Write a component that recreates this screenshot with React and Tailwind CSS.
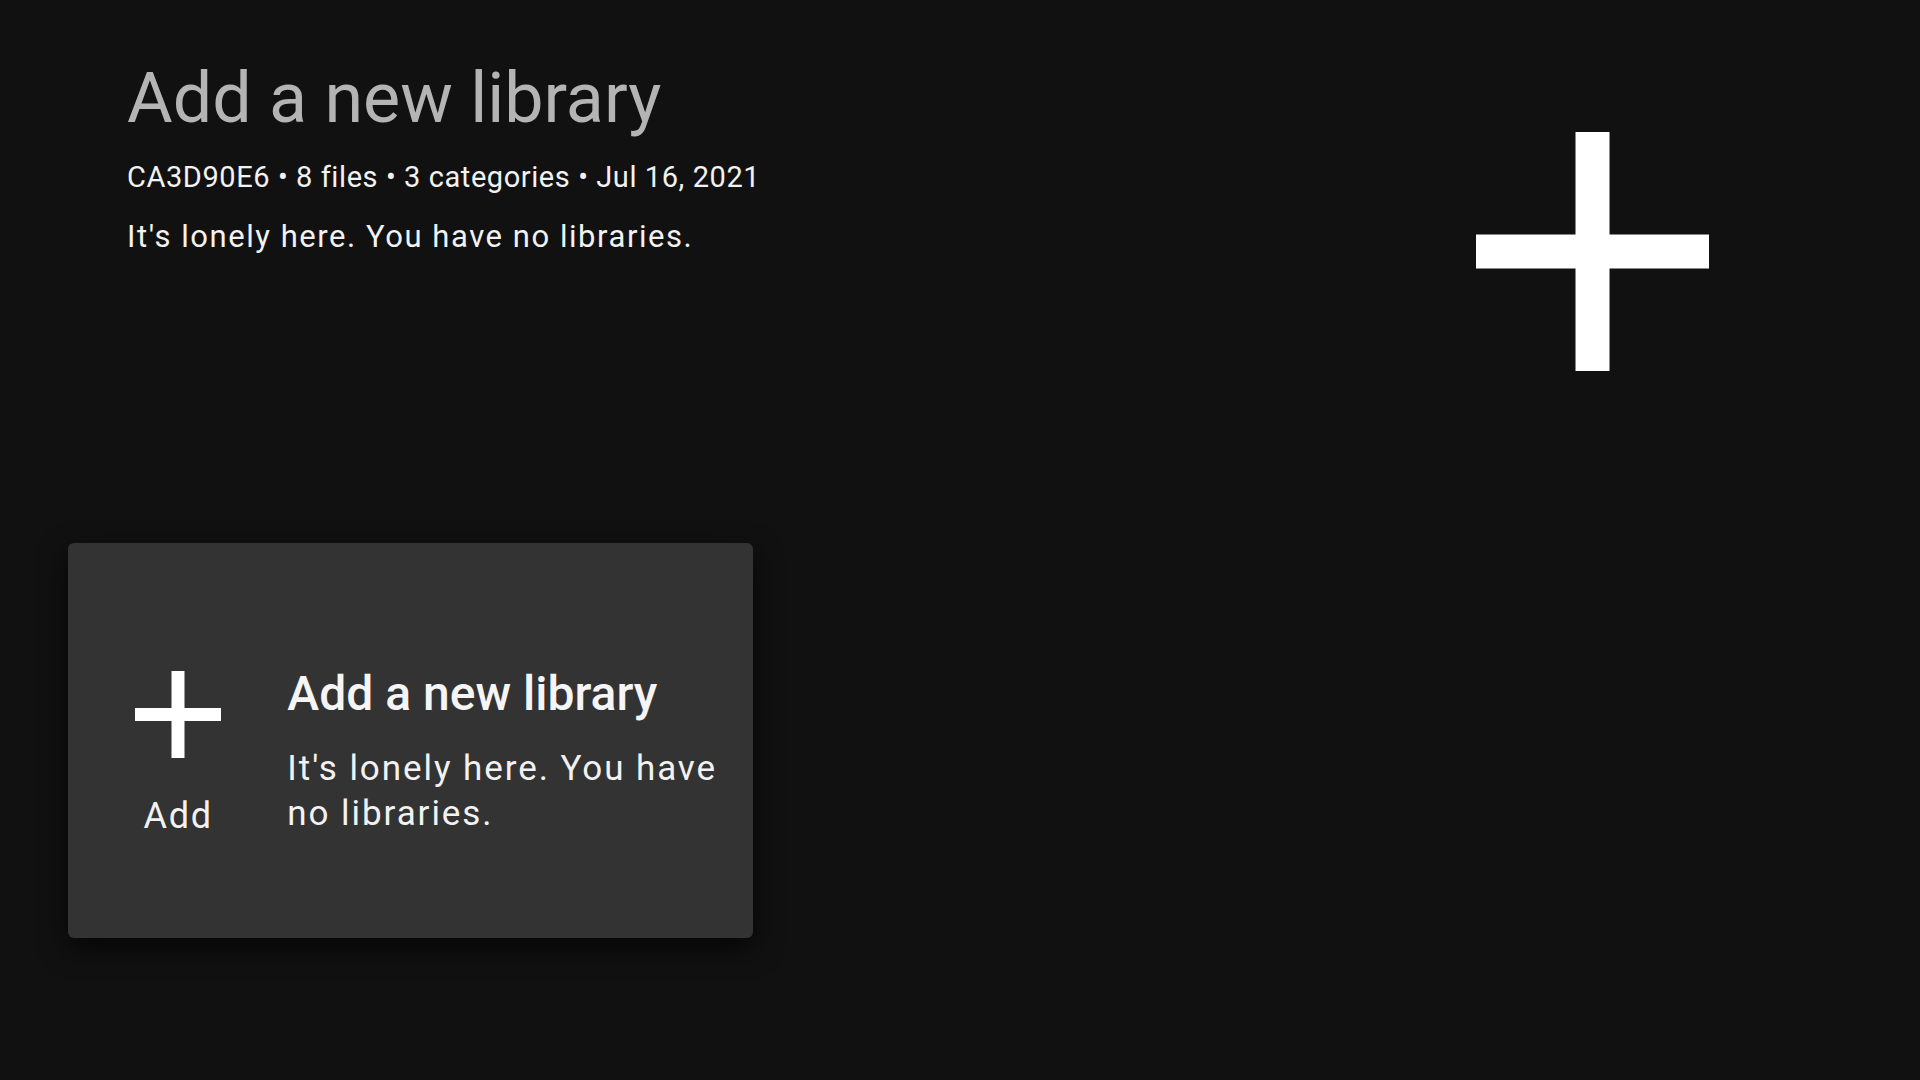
import React from 'react';

const Plus = ({ w, h, stroke, className }) => (
    <svg width={w} height={h} viewBox={`0 0 ${w} ${h}`} className={className}>
        <rect x={(w - stroke) / 2} y="0" width={stroke} height={h} fill="#ffffff" />
        <rect x="0" y={(h - stroke) / 2} width={w} height={stroke} fill="#ffffff" />
    </svg>
);

const App = () => {
    return (
        <div className="w-full min-h-screen bg-[#111111] font-['Roboto',sans-serif] flex flex-col">
            <div className="flex justify-between items-start pl-[127px] pr-[211px] pt-[63px]">
                <div className="flex flex-col">
                    <h1 className="text-[70px] leading-[70px] font-normal text-[#b4b4b4]">
                        Add a new library
                    </h1>
                    <div className="mt-[30px] text-[29px] leading-[29px] tracking-[0.02em] text-[#f2f2f2]">
                        CA3D90E6 • 8 files • 3 categories • Jul 16, 2021
                    </div>
                    <div className="mt-[29px] text-[31px] leading-[31px] tracking-[0.05em] text-[#f2f2f2]">
                        It's lonely here. You have no libraries.
                    </div>
                </div>
                <Plus w={233} h={239} stroke={34} className="mt-[69px]" />
            </div>

            <div className="ml-[68px] mt-[172px] w-[685px] h-[395px] rounded-[6px] bg-[#333333] shadow-[0_10px_28px_rgba(0,0,0,0.7)] flex items-start pl-[67px] pr-[24px] pt-[123px]">
                <div className="flex flex-col items-center w-[87px] pt-[5px]">
                    <Plus w={86} h={87} stroke={13} />
                    <div className="mt-[38px] text-[36px] leading-[40px] tracking-[0.05em] text-[#f2f2f2]">
                        Add
                    </div>
                </div>
                <div className="ml-[66px] w-[445px] flex flex-col">
                    <div className="text-[48px] leading-[56px] font-medium text-[#f5f5f5]">
                        Add a new library
                    </div>
                    <div className="mt-[24px] text-[35px] leading-[45px] tracking-[0.055em] text-[#f2f2f2]">
                        It's lonely here. You have no libraries.
                    </div>
                </div>
            </div>
        </div>
    );
};

export default App;
